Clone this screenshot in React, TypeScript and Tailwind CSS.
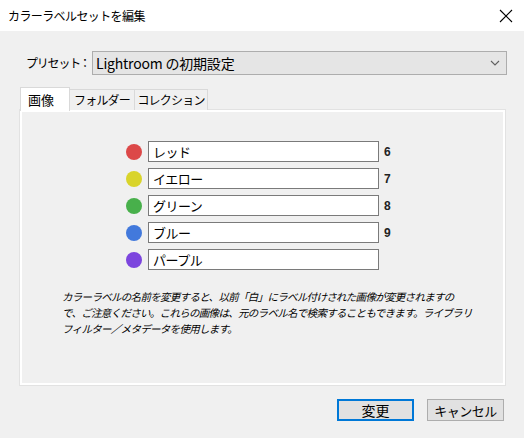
import * as React from 'react'

const labels = [
  { name: 'レッド', color: 'bg-[#dc4848]', key: '6' },
  { name: 'イエロー', color: 'bg-[#d9d42b]', key: '7' },
  { name: 'グリーン', color: 'bg-[#48b04b]', key: '8' },
  { name: 'ブルー', color: 'bg-[#4279dc]', key: '9' },
  { name: 'パープル', color: 'bg-[#7c45de]', key: '' },
]

export default function App() {
  const [tab, setTab] = React.useState(0)
  const tabs = ['画像', 'フォルダー', 'コレクション']

  return (
    <div
      className="w-[524px] h-[438px] bg-[#f0f0f0] flex flex-col text-black overflow-hidden"
      style={{ fontFamily: '"Noto Sans CJK JP", "Noto Sans", sans-serif' }}
    >
      {/* タイトルバー */}
      <div className="h-[31px] bg-white flex items-center justify-between pl-[8px] pr-[11px] shrink-0">
        <span className="text-[12px] leading-none tracking-[-0.6px]">カラーラベルセットを編集</span>
        <svg width="14" height="14" viewBox="0 0 14 14" className="text-black">
          <path d="M1 1L13 13M13 1L1 13" stroke="currentColor" strokeWidth="1.1" />
        </svg>
      </div>

      <div className="flex flex-col px-[20px] pt-[20px]">
        {/* プリセット */}
        <div className="flex items-center h-[24px]">
          <div className="w-[72px] shrink-0 pl-[6px] flex items-center text-[12px] whitespace-nowrap">
            <span className="tracking-[-1.2px]">プリセット</span>
            <span className="ml-[-1px]">：</span>
          </div>
          <div className="flex-1 h-[24px] mr-[-3px] bg-[#e5e5e5] border border-[#adadad] flex items-center justify-between pl-[3px] pr-[6px]">
            <span className="text-[14px] tracking-[-0.2px]">Lightroom の初期設定</span>
            <svg width="10" height="6" viewBox="0 0 10 6">
              <path d="M1 1L5 5L9 1" stroke="#606060" strokeWidth="1.1" fill="none" />
            </svg>
          </div>
        </div>

        {/* タブ */}
        <div className="flex items-end h-[23px] mt-[12px] relative z-10">
          {tabs.map((t, i) =>
            i === tab ? (
              <button
                key={t}
                onClick={() => setTab(i)}
                className="h-[24px] w-[50px] bg-white border border-b-0 border-[#d9d9d9] text-[13px] text-left pl-[7px] mb-[-1px]"
              >
                {t}
              </button>
            ) : (
              <button
                key={t}
                onClick={() => setTab(i)}
                className={`h-[21px] bg-[#f0f0f0] border border-b-0 border-l-0 border-[#d9d9d9] text-[12px] tracking-[-0.8px] leading-none whitespace-nowrap ${
                  i === 1 ? 'w-[65px]' : 'w-[73px]'
                }`}
              >
                {t}
              </button>
            ),
          )}
        </div>

        {/* パネル */}
        <div className="h-[275px] w-[485px] border-2 border-white shadow-[0_0_0_1px_#e2e2e2] flex flex-col">
          <div className="flex flex-col gap-[6px] pt-[29px] pl-[104px]">
            {labels.map((l) => (
              <div key={l.name} className="flex items-center h-[21px]">
                <span className={`w-[16px] h-[16px] rounded-full ${l.color}`} />
                <div className="ml-[6px] w-[231px] h-[21px] bg-white border border-[#7a7a7a] flex items-center pl-[4px] text-[13px] tracking-[-0.5px]">
                  {l.name}
                </div>
                <span
                  className="ml-[5px] text-[12px] font-bold text-[#222]"
                  style={{ fontFamily: '"Liberation Sans", sans-serif' }}
                >
                  {l.key}
                </span>
              </div>
            ))}
          </div>

          <p className="mt-[19px] pl-[40px] text-[10.5px] italic leading-[16px] tracking-[-0.7px] whitespace-nowrap">
            カラーラベルの名前を変更すると、以前「白」にラベル付けされた画像が変更されますの
            <br />
            で、ご注意ください。これらの画像は、元のラベル名で検索することもできます。ライブラリ
            <br />
            フィルター／メタデータを使用します。
          </p>
        </div>

        {/* ボタン */}
        <div className="flex justify-end gap-[13px] mt-[14px]">
          <button className="w-[77px] h-[22px] bg-[#e1e1e1] border-2 border-[#0078d7] text-[14px] leading-none">
            変更
          </button>
          <button className="w-[77px] h-[22px] bg-[#e1e1e1] border border-[#adadad] text-[13px] leading-none tracking-[-0.5px]">
            キャンセル
          </button>
        </div>
      </div>
    </div>
  )
}
